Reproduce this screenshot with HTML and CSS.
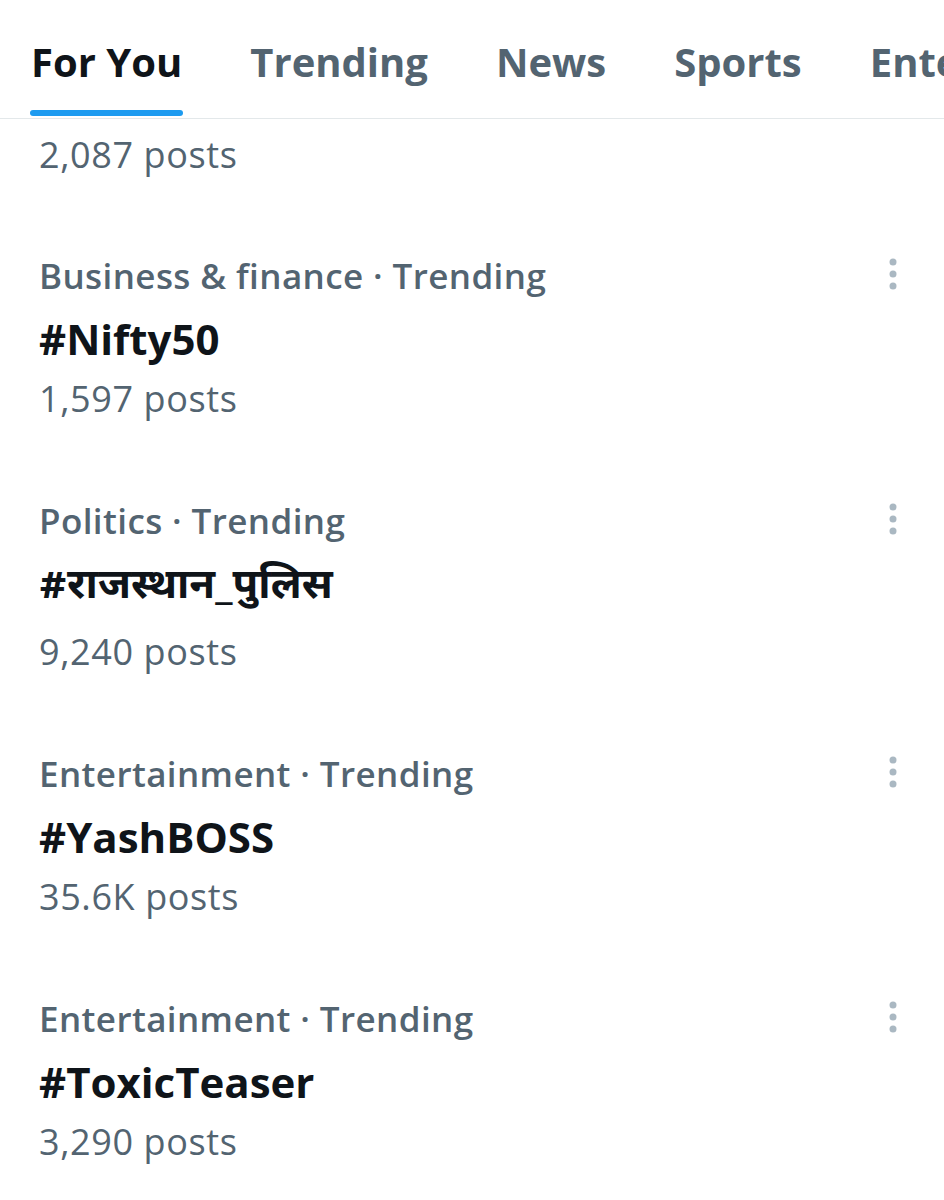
FILE: index.html
```html
<!DOCTYPE html>
<html lang="en">
<head>
    <meta charset="UTF-8">
    <meta name="viewport" content="width=device-width, initial-scale=1.0">
    <title>Explore</title>
    <link rel="stylesheet" href="styles.css">
</head>
<body>
    <!-- Explore tabs -->
    <nav class="tabs">
        <div class="tab active">
            <span class="tab-label">For You</span>
            <span class="tab-bar"></span>
        </div>
        <div class="tab"><span class="tab-label">Trending</span></div>
        <div class="tab"><span class="tab-label">News</span></div>
        <div class="tab"><span class="tab-label">Sports</span></div>
        <div class="tab"><span class="tab-label">Entertainment</span></div>
    </nav>

    <div class="trends">
        <div class="trend partial">
            <div class="count">2,087 posts</div>
        </div>

        <div class="trend">
            <div class="trend-head">
                <span class="category">Business &amp; finance · Trending</span>
                <svg class="more" viewBox="0 0 24 28"><circle cx="12" cy="2" r="3.5"/><circle cx="12" cy="14" r="3.5"/><circle cx="12" cy="26" r="3.5"/></svg>
            </div>
            <div class="title">#Nifty50</div>
            <div class="count">1,597 posts</div>
        </div>

        <div class="trend">
            <div class="trend-head">
                <span class="category">Politics · Trending</span>
                <svg class="more" viewBox="0 0 24 28"><circle cx="12" cy="2" r="3.5"/><circle cx="12" cy="14" r="3.5"/><circle cx="12" cy="26" r="3.5"/></svg>
            </div>
            <div class="title hindi">#राजस्थान_पुलिस</div>
            <div class="count">9,240 posts</div>
        </div>

        <div class="trend">
            <div class="trend-head">
                <span class="category">Entertainment · Trending</span>
                <svg class="more" viewBox="0 0 24 28"><circle cx="12" cy="2" r="3.5"/><circle cx="12" cy="14" r="3.5"/><circle cx="12" cy="26" r="3.5"/></svg>
            </div>
            <div class="title">#YashBOSS</div>
            <div class="count">35.6K posts</div>
        </div>

        <div class="trend">
            <div class="trend-head">
                <span class="category">Entertainment · Trending</span>
                <svg class="more" viewBox="0 0 24 28"><circle cx="12" cy="2" r="3.5"/><circle cx="12" cy="14" r="3.5"/><circle cx="12" cy="26" r="3.5"/></svg>
            </div>
            <div class="title">#ToxicTeaser</div>
            <div class="count">3,290 posts</div>
        </div>
    </div>
</body>
</html>
```

FILE: styles.css
```css
body { margin: 0; background: #fff; font-family: "Open Sans", "Noto Sans", sans-serif; color: #0f1419; overflow: hidden; }

/* tabs */
.tabs { display: flex; gap: 68px; height: 118px; padding-left: 31px; border-bottom: 1px solid #e3e8ea; white-space: nowrap; overflow: hidden; }
.tab { display: flex; flex-direction: column; justify-content: space-between; padding: 34px 0 2px; }
.tab-label { font-size: 40px; line-height: 55px; font-weight: 700; color: #536471; }
.tab.active .tab-label { color: #0f1419; }
.tab-bar { display: block; height: 6px; border-radius: 3px; background: #1d9bf0; margin: 0 -1px; }

/* trend list */
.trend { padding: 38px 0 40px 39px; }
.trend.partial { padding-top: 14px; padding-bottom: 39px; }
.trend-head { display: flex; align-items: center; justify-content: space-between; }
.category { font-size: 35px; line-height: 44px; font-weight: 600; letter-spacing: 0.4px; color: #536471; }
.more { width: 24px; height: 28px; margin: 0 39px 5px 0; fill: #aab8c2; overflow: visible; }
.title { margin-top: 15px; font-size: 42px; line-height: 52px; font-weight: 700; }
.title.hindi { line-height: 60px; font-family: "Noto Sans Devanagari", "Lohit Devanagari", "Open Sans", sans-serif; }
.count { margin-top: 12px; font-size: 36px; line-height: 44px; letter-spacing: 0.6px; color: #536471; }
.partial .count { margin-top: 0; }
```
